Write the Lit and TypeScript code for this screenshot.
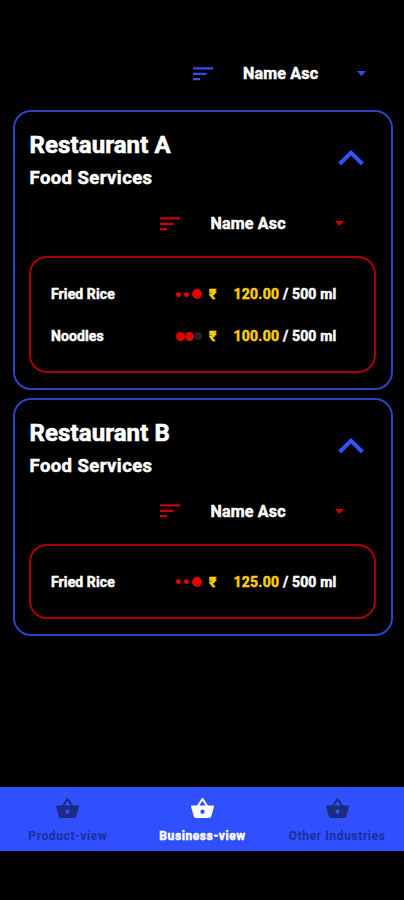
import { LitElement, html, css, svg } from "lit";
import { customElement, property } from "lit/decorators.js";

interface Item {
  name: string;
  dots: string[];
  price: string;
}

@customElement("sort-select")
class SortSelect extends LitElement {
  static styles = css`
    :host {
      display: flex;
      align-items: center;
      height: 24px;
      font: 700 16px/24px Roboto, "Liberation Sans", sans-serif;
      -webkit-text-stroke: 0.5px #fff;
      color: #fff;
    }
    .lines {
      width: 20px;
      height: 14px;
      fill: var(--accent);
      flex: none;
      margin-top: -1px;
    }
    .label {
      width: var(--label-width, 114px);
      margin-left: var(--label-gap, 30.5px);
      letter-spacing: 0.2px;
      white-space: nowrap;
    }
    .caret {
      width: 9px;
      height: 5px;
      fill: var(--accent);
      margin-top: -1px;
    }
  `;
  render() {
    return html`
      <svg class="lines" viewBox="0 0 20 14">
        <path d="M0 .3h20v2.2H0zM0 5.7h13.5v2.2H0zM0 11.1h7v2.2H0z" />
      </svg>
      <span class="label">Name Asc</span>
      <svg class="caret" viewBox="0 0 9 5"><path d="M0 0h9L4.5 5z" /></svg>
    `;
  }
}

@customElement("business-card")
class BusinessCard extends LitElement {
  @property() name = "";
  @property({ attribute: false }) items: Item[] = [];

  static styles = css`
    :host {
      display: block;
      box-sizing: border-box;
      border: 2px solid #2a44c4;
      border-radius: 18px;
      padding: 17px 14.5px 15px 14.5px;
      color: #fff;
      font-family: Roboto, "Liberation Sans", sans-serif;
      font-weight: 700;
      --accent: #c80404;
    }
    .head {
      display: flex;
      justify-content: space-between;
      height: 83px;
    }
    .name {
      font-size: 24px;
      line-height: 32px;
      letter-spacing: 0.1px;
      padding-left: 0.5px;
      -webkit-text-stroke: 0.6px #fff;
      white-space: nowrap;
    }
    .kind {
      font-size: 18.5px;
      line-height: 34px;
      letter-spacing: 0.42px;
      padding-left: 0.5px;
      -webkit-text-stroke: 0.5px #fff;
      white-space: nowrap;
    }
    .chevron {
      width: 26px;
      height: 16px;
      margin: 21px 12.5px 0 0;
      fill: none;
      stroke: #3153fb;
      stroke-width: 4;
    }
    sort-select {
      margin-left: 130.5px;
      --label-gap: 31px;
      --label-width: 124.5px;
    }
    .list {
      box-sizing: border-box;
      margin-top: 20px;
      border: 2px solid #a80404;
      border-radius: 18px;
      padding: 15px 0 14px 20px;
    }
    .row {
      display: flex;
      align-items: center;
      height: 42px;
      font-size: 14px;
      white-space: nowrap;
      -webkit-text-stroke: 0.5px currentColor;
    }
    .item {
      width: 124.5px;
      letter-spacing: 0.1px;
    }
    .dots {
      width: 33.5px;
      display: flex;
      align-items: center;
    }
    .dot {
      border-radius: 50%;
      background: #e00000;
    }
    .small {
      width: 5px;
      height: 5px;
      margin-right: 3px;
    }
    .big {
      width: 10px;
      height: 10px;
    }
    .mid {
      width: 9px;
      height: 9px;
    }
    .off {
      width: 8px;
      height: 8px;
      background: #222;
    }
    .rupee,
    .price {
      color: #fdd000;
    }
    .rupee {
      width: 24.5px;
    }
    .price {
      width: 49.5px;
      letter-spacing: 0.25px;
    }
    .unit {
      letter-spacing: 0.15px;
    }
  `;
  render() {
    return html`
      <div class="head">
        <div>
          <div class="name">${this.name}</div>
          <div class="kind">Food Services</div>
        </div>
        <svg class="chevron" viewBox="0 0 26 16"><path d="M1.5 14L13 2.8 24.5 14" /></svg>
      </div>
      <sort-select></sort-select>
      <div class="list">
        ${this.items.map(
          (i) => html`<div class="row">
            <span class="item">${i.name}</span>
            <span class="dots">${i.dots.map((d) => html`<i class="dot ${d}"></i>`)}</span>
            <span class="rupee">₹</span>
            <span class="price">${i.price}</span>
            <span class="unit">/ 500 ml</span>
          </div>`
        )}
      </div>
    `;
  }
}

const basket = svg`<path d="M17.21 9l-4.38-6.56c-.19-.28-.51-.42-.83-.42-.32 0-.64.14-.83.43L6.79 9H2c-.55 0-1 .45-1 1 0 .09.01.18.04.27l2.54 9.27c.23.84 1 1.46 1.92 1.46h13c.92 0 1.69-.62 1.93-1.46l2.54-9.27L23 10c0-.55-.45-1-1-1h-4.79zM9 9l3-4.4L15 9H9zm3 8c-1.1 0-2-.9-2-2s.9-2 2-2 2 .9 2 2-.9 2-2 2z"/>`;

@customElement("app-root")
class AppRoot extends LitElement {
  static styles = css`
    :host {
      display: flex;
      flex-direction: column;
      box-sizing: border-box;
      width: 404px;
      height: 900px;
      padding: 62px 0 49px;
      background: #000;
      overflow: hidden;
    }
    .top {
      --accent: #3150f0;
      margin-left: 192.5px;
    }
    .cards {
      flex: 1;
      display: flex;
      flex-direction: column;
      gap: 7.5px;
      padding: 24px 11.5px 0 12.5px;
    }
    .nav {
      display: grid;
      grid-template-columns: repeat(3, 1fr);
      height: 64px;
      background: #3050ff;
      font: 700 12px/16px Roboto, "Liberation Sans", sans-serif;
      letter-spacing: 0.6px;
    }
    .tab {
      display: flex;
      flex-direction: column;
      align-items: center;
      padding: 9px 0 0 1px;
      color: #1b2f9c;
      white-space: nowrap;
    }
    .tab svg {
      width: 25px;
      height: 25px;
      fill: #1a2b80;
      margin-bottom: 7px;
    }
    .active {
      color: #fff;
      -webkit-text-stroke: 0.5px #fff;
    }
    .active svg {
      fill: #fff;
    }
  `;
  render() {
    const rice = ["small", "small", "big"];
    const noodles = ["mid", "mid", "off"];
    return html`
      <sort-select class="top"></sort-select>
      <div class="cards">
        <business-card
          name="Restaurant A"
          .items=${[
            { name: "Fried Rice", dots: rice, price: "120.00" },
            { name: "Noodles", dots: noodles, price: "100.00" },
          ]}
        ></business-card>
        <business-card
          name="Restaurant B"
          .items=${[{ name: "Fried Rice", dots: rice, price: "125.00" }]}
        ></business-card>
      </div>
      <nav class="nav">
        ${["Product-view", "Business-view", "Other Industries"].map(
          (t, n) => html`<div class="tab ${n === 1 ? "active" : ""}">
            <svg viewBox="0 0 24 24">${basket}</svg>
            <span>${t}</span>
          </div>`
        )}
      </nav>
    `;
  }
}
